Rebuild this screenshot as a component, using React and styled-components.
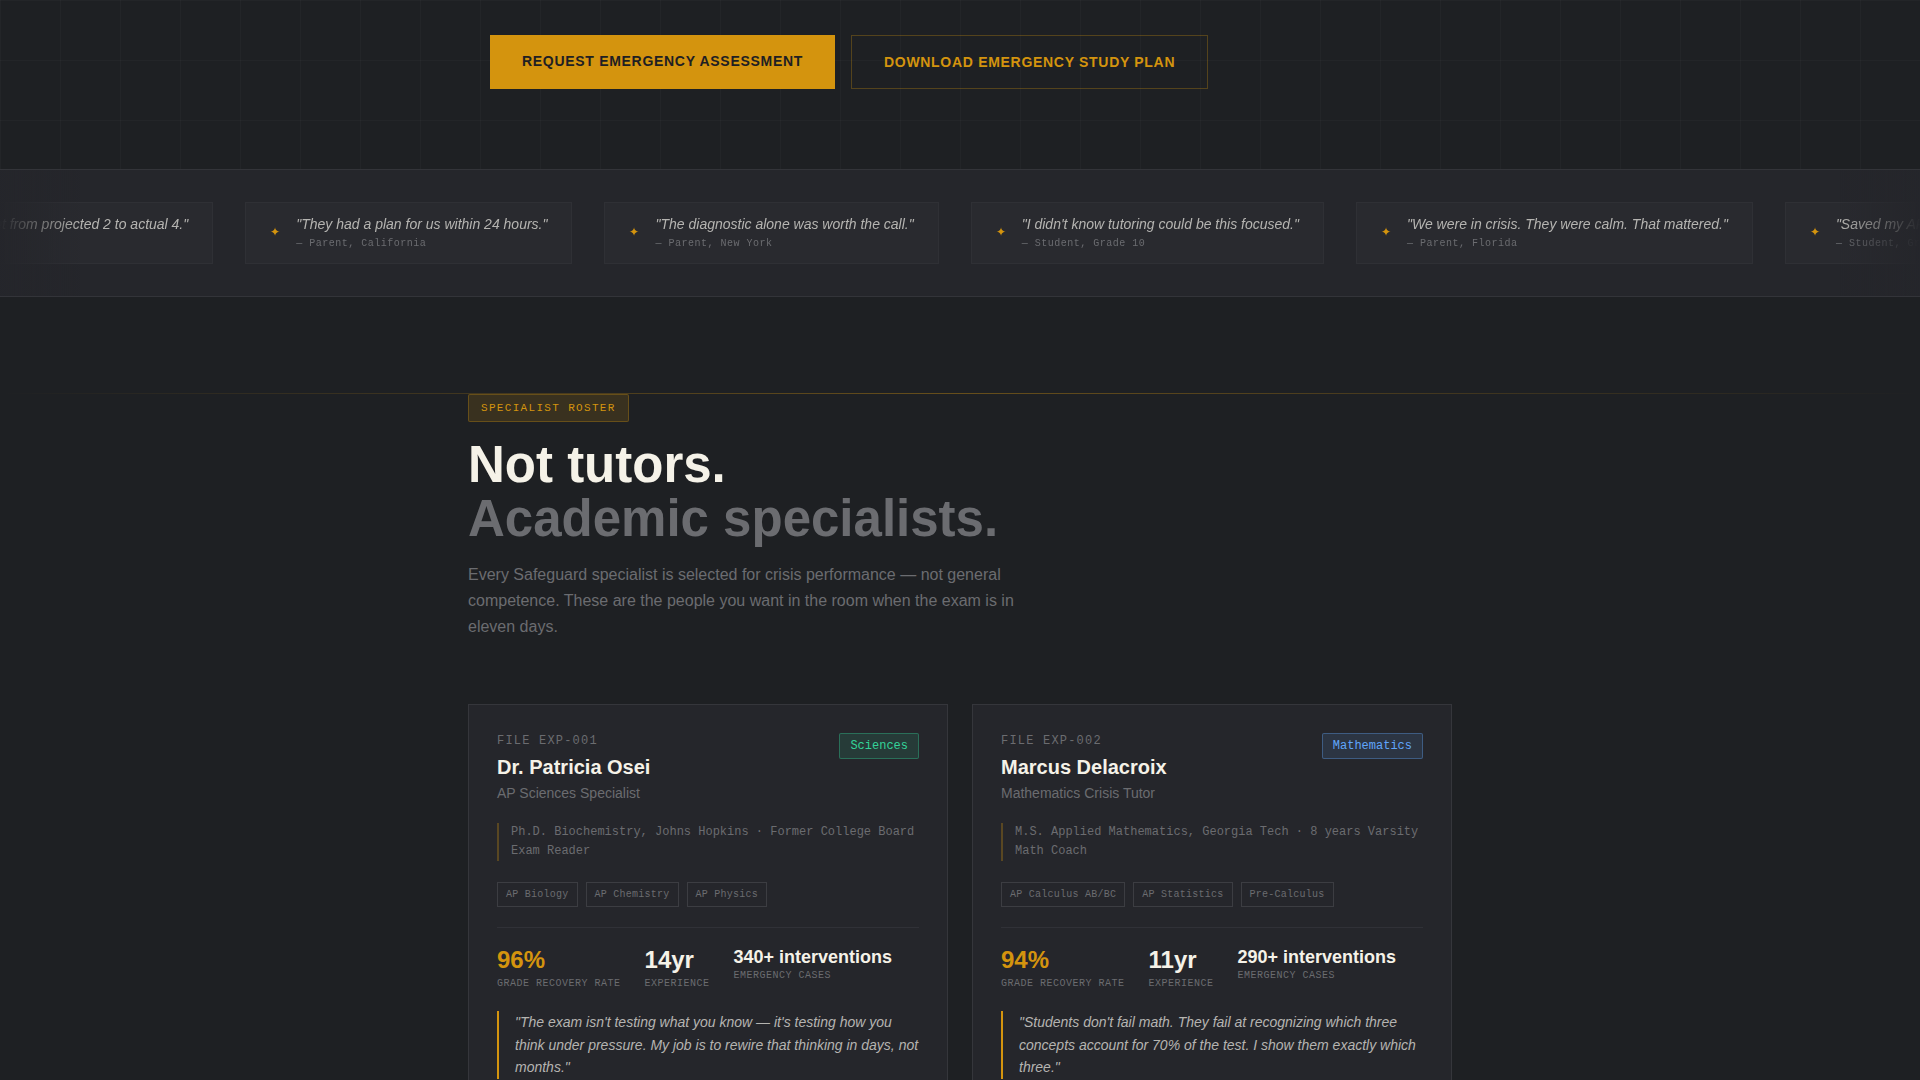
import React from "react";
import styled, { createGlobalStyle } from "styled-components";

const testimonials = [
    { quote: "AP Chem went from projected 2 to actual 4.", author: "Student" },
    { quote: "They had a plan for us within 24 hours.", author: "Parent, California" },
    { quote: "The diagnostic alone was worth the call.", author: "Parent, New York" },
    { quote: "I didn't know tutoring could be this focused.", author: "Student, Grade 10" },
    { quote: "We were in crisis. They were calm. That mattered.", author: "Parent, Florida" },
    { quote: "Saved my AP score.", author: "Student, Grade 11" },
];

const specialists = [
    {
        file: "EXP-001",
        name: "Dr. Patricia Osei",
        role: "AP Sciences Specialist",
        field: "Sciences",
        color: "52, 211, 153",
        credentials: "Ph.D. Biochemistry, Johns Hopkins · Former College Board Exam Reader",
        subjects: ["AP Biology", "AP Chemistry", "AP Physics"],
        rate: "96%",
        experience: "14yr",
        cases: "340+ interventions",
        quote: "The exam isn't testing what you know — it's testing how you think under pressure. My job is to rewire that thinking in days, not months.",
    },
    {
        file: "EXP-002",
        name: "Marcus Delacroix",
        role: "Mathematics Crisis Tutor",
        field: "Mathematics",
        color: "96, 165, 250",
        credentials: "M.S. Applied Mathematics, Georgia Tech · 8 years Varsity Math Coach",
        subjects: ["AP Calculus AB/BC", "AP Statistics", "Pre-Calculus"],
        rate: "94%",
        experience: "11yr",
        cases: "290+ interventions",
        quote: "Students don't fail math. They fail at recognizing which three concepts account for 70% of the test. I show them exactly which three.",
    },
];

const App = () => {
    return (
        <Page>
            <GlobalStyle />
            <Hero>
                <HeroActions>
                    <PrimaryLink href="#assessment">Request Emergency Assessment</PrimaryLink>
                    <OutlineLink href="#study-plan">Download Emergency Study Plan</OutlineLink>
                </HeroActions>
            </Hero>
            <Marquee>
                <Track>
                    {testimonials.map((item) => (
                        <Testimonial key={item.quote}>
                            <Star>✦</Star>
                            <div>
                                <TestimonialQuote>"{item.quote}"</TestimonialQuote>
                                <Author>— {item.author}</Author>
                            </div>
                        </Testimonial>
                    ))}
                </Track>
            </Marquee>
            <Roster>
                <Container>
                    <SectionTag>Specialist Roster</SectionTag>
                    <Title>
                        Not tutors.
                        <MutedLine>Academic specialists.</MutedLine>
                    </Title>
                    <Intro>
                        Every Safeguard specialist is selected for crisis performance — not general
                        competence. These are the people you want in the room when the exam is in
                        eleven days.
                    </Intro>
                    <CardGrid>
                        {specialists.map((person) => (
                            <SpecialistCard key={person.file} person={person} />
                        ))}
                    </CardGrid>
                </Container>
            </Roster>
        </Page>
    );
};

const SpecialistCard = ({ person }) => {
    return (
        <Card>
            <CardHeader>
                <div>
                    <FileNumber>FILE {person.file}</FileNumber>
                    <Name>{person.name}</Name>
                    <Role>{person.role}</Role>
                </div>
                <FieldBadge $color={person.color}>{person.field}</FieldBadge>
            </CardHeader>
            <Credentials>{person.credentials}</Credentials>
            <Subjects>
                {person.subjects.map((subject) => (
                    <Subject key={subject}>{subject}</Subject>
                ))}
            </Subjects>
            <Stats>
                <div>
                    <StatValue $accent>{person.rate}</StatValue>
                    <StatLabel>Grade Recovery Rate</StatLabel>
                </div>
                <div>
                    <StatValue>{person.experience}</StatValue>
                    <StatLabel>Experience</StatLabel>
                </div>
                <div>
                    <SmallStatValue>{person.cases}</SmallStatValue>
                    <StatLabel>Emergency Cases</StatLabel>
                </div>
            </Stats>
            <Quote>"{person.quote}"</Quote>
        </Card>
    );
};

const sans = `"Liberation Sans", Arial, sans-serif`;
const mono = `"Liberation Mono", "Courier New", monospace`;

const GlobalStyle = createGlobalStyle`
    * {
        box-sizing: border-box;
        margin: 0;
        padding: 0;
    }

    body {
        background-color: #1e2023;
        color: #f5f2e8;
        font-family: ${sans};
        line-height: 1.5;
    }
`

const Page = styled.main`
    height: 100vh;
    overflow: hidden;
`

const Hero = styled.section`
    padding: 35px 48px 80px;
    background-image:
        linear-gradient(rgba(255, 255, 255, 0.025) 1px, transparent 1px),
        linear-gradient(90deg, rgba(255, 255, 255, 0.025) 1px, transparent 1px);
    background-size: 60px 60px;
`

const HeroActions = styled.div`
    display: flex;
    flex-wrap: wrap;
    gap: 16px;
    max-width: 940px;
    margin: 0 auto;
`

const PrimaryLink = styled.a`
    padding: 18px 32px;
    background-color: #d4940e;
    color: #1e2023;
    font-size: 14px;
    font-weight: 700;
    line-height: 16px;
    letter-spacing: 0.05em;
    text-transform: uppercase;
    text-decoration: none;
`

const OutlineLink = styled(PrimaryLink)`
    background-color: transparent;
    color: #d4940e;
    border: 1px solid rgba(212, 148, 14, 0.3);
`

const Marquee = styled.section`
    position: relative;
    overflow: hidden;
    padding: 32px 0;
    background-color: #25262b;
    border-top: 1px solid #333439;
    border-bottom: 1px solid #333439;

    &::before,
    &::after {
        content: "";
        position: absolute;
        top: 0;
        bottom: 0;
        width: 80px;
        z-index: 1;
    }

    &::before {
        left: 0;
        background: linear-gradient(90deg, #25262b, transparent);
    }

    &::after {
        right: 0;
        background: linear-gradient(270deg, #25262b, transparent);
    }
`

const Track = styled.div`
    display: flex;
    gap: 32px;
    width: max-content;
    transform: translateX(-143px);
    will-change: transform;
`

const Testimonial = styled.article`
    display: flex;
    align-items: center;
    gap: 16px;
    padding: 12px 24px;
    background-color: #292a2f;
    border: 1px solid #2f3035;
    white-space: nowrap;
`

const Star = styled.span`
    padding-bottom: 2px;
    color: #d4940e;
    font-size: 12px;
    line-height: 20px;
`

const TestimonialQuote = styled.p`
    margin-bottom: 2px;
    color: #b5b4b1;
    font-size: 14px;
    font-style: italic;
    line-height: 19px;
`

const Author = styled.p`
    color: #6b6c70;
    font-family: ${mono};
    font-size: 10px;
    line-height: 15px;
    letter-spacing: 0.05em;
`

const Roster = styled.section`
    margin-top: 96px;

    &::before {
        content: "";
        display: block;
        height: 1px;
        background: linear-gradient(90deg, transparent, rgba(212, 148, 14, 0.4), transparent);
    }
`

const Container = styled.div`
    max-width: 1080px;
    margin: 0 auto;
    padding: 0 48px;
`

const SectionTag = styled.p`
    width: fit-content;
    padding: 5px 12px;
    background-color: rgba(212, 148, 14, 0.15);
    border: 1px solid rgba(212, 148, 14, 0.3);
    border-radius: 2px;
    color: #d4940e;
    font-family: ${mono};
    font-size: 11px;
    line-height: 16px;
    letter-spacing: 0.12em;
    text-transform: uppercase;
`

const Title = styled.h2`
    margin-top: 16px;
    font-size: 51px;
    line-height: 54px;
`

const MutedLine = styled.span`
    display: block;
    color: #6b6c70;
`

const Intro = styled.p`
    max-width: 560px;
    margin-top: 16px;
    color: #6b6c70;
    font-size: 16px;
    line-height: 26px;
`

const CardGrid = styled.div`
    display: grid;
    grid-template-columns: repeat(2, 1fr);
    gap: 24px;
    margin-top: 64px;
`

const Card = styled.article`
    padding: 28px;
    background-color: #25262b;
    border: 1px solid #35363b;
`

const CardHeader = styled.header`
    display: flex;
    justify-content: space-between;
    align-items: flex-start;
`

const FileNumber = styled.p`
    color: #6b6c70;
    font-family: ${mono};
    font-size: 12px;
    line-height: 16px;
    letter-spacing: 0.1em;
`

const Name = styled.h3`
    margin-top: 4px;
    font-size: 20px;
    line-height: 28px;
`

const Role = styled.p`
    margin-top: 2px;
    color: #6b6c70;
    font-size: 14px;
    line-height: 20px;
`

const FieldBadge = styled.span`
    padding: 3px 10px;
    background-color: rgba(${({ $color }) => $color}, 0.12);
    border: 1px solid rgba(${({ $color }) => $color}, 0.35);
    border-radius: 2px;
    color: rgb(${({ $color }) => $color});
    font-family: ${mono};
    font-size: 12px;
    line-height: 18px;
`

const Credentials = styled.p`
    margin-top: 20px;
    padding-left: 12px;
    border-left: 2px solid rgba(212, 148, 14, 0.3);
    color: #6b6c70;
    font-family: ${mono};
    font-size: 12px;
    line-height: 1.6;
`

const Subjects = styled.ul`
    display: flex;
    flex-wrap: wrap;
    gap: 8px;
    margin-top: 21px;
    list-style: none;
`

const Subject = styled.li`
    padding: 4px 8px;
    border: 1px solid #3c3d42;
    color: #6b6c70;
    font-family: ${mono};
    font-size: 10px;
    line-height: 15px;
    letter-spacing: 0.025em;
`

const Stats = styled.div`
    display: flex;
    gap: 24px;
    margin-top: 20px;
    padding-top: 18px;
    border-top: 1px solid #303137;
`

const StatValue = styled.p`
    margin-bottom: 3px;
    color: ${({ $accent }) => ($accent ? "#d4940e" : "#f5f2e8")};
    font-size: 24px;
    font-weight: 700;
    line-height: 27px;
`

const SmallStatValue = styled(StatValue)`
    margin-bottom: 0;
    font-size: 18px;
    line-height: 22px;
`

const StatLabel = styled.p`
    color: #6b6c70;
    font-family: ${mono};
    font-size: 10px;
    line-height: 15px;
    letter-spacing: 0.05em;
    text-transform: uppercase;
`

const Quote = styled.blockquote`
    margin-top: 20px;
    padding-left: 16px;
    border-left: 2px solid #d4940e;
    color: #b5b4b1;
    font-size: 14px;
    font-style: italic;
    line-height: 1.6;
`

export default App;
